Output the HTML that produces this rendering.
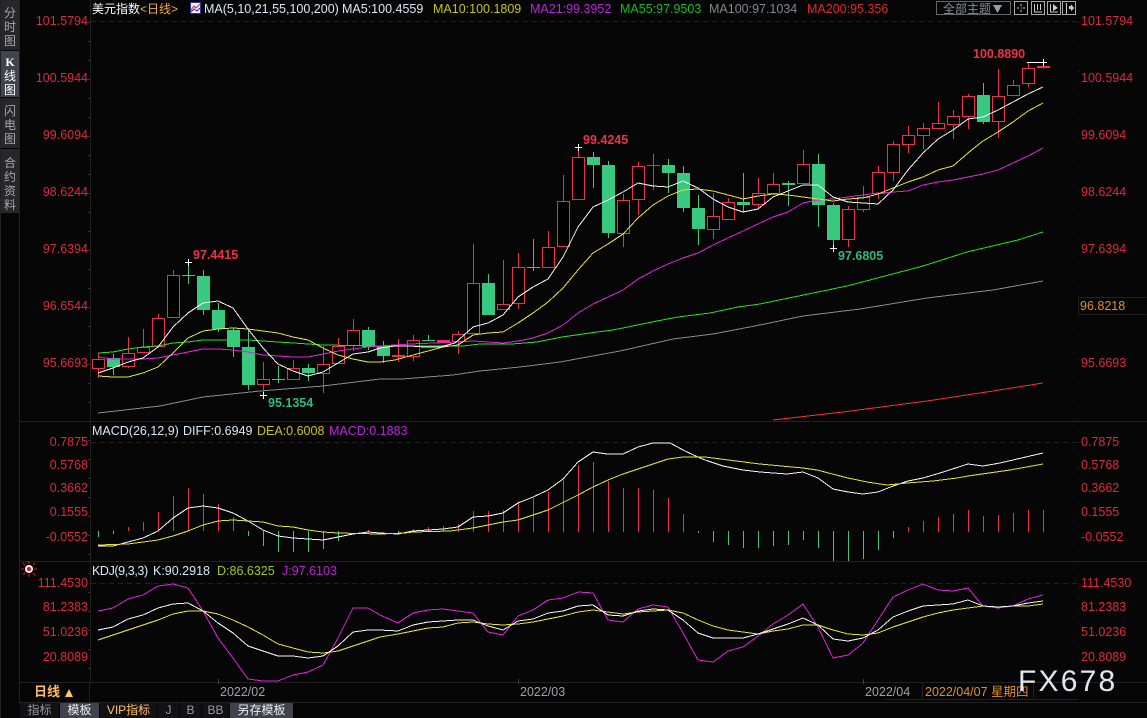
<!DOCTYPE html>
<html>
<head>
<meta charset="utf-8">
<style>
html,body{margin:0;padding:0;background:#060606;}
#r{position:relative;width:1147px;height:718px;overflow:hidden;background:#060606;font-family:"Liberation Sans","Noto Sans CJK SC",sans-serif;font-size:12.5px;line-height:14px;color:#ddd;}
#r span,#r div{position:absolute;white-space:nowrap;}
svg{position:absolute;left:0;top:0;}
.l{color:#e0283c;right:1059px;}
.a{color:#e0283c;left:1081px;}
.b{font-weight:bold;font-size:12.5px;}
.s{left:1px;width:18px;text-align:center;font-size:12px;line-height:14px;color:#a8a8a8;}
.tab{top:703px;height:15px;line-height:15px;font-size:12px;text-align:center;color:#999;background:#121214;}
.on{background:#40424e;color:#eee;}
.d{top:685px;color:#9aa4ae;font-size:12.5px;}
</style>
</head>
<body>
<div id="r">
<div style="left:1px;top:0;width:18px;height:50px;background:#26262b"></div>
<div style="left:1px;top:51px;width:18px;height:46px;background:#42434d"></div>
<div style="left:1px;top:98px;width:18px;height:50px;background:#26262b"></div>
<div style="left:1px;top:149px;width:18px;height:64px;background:#26262b"></div>

<svg width="1147" height="718" viewBox="0 0 1147 718" shape-rendering="crispEdges" fill="none">
<!-- frame -->
<path stroke="#222" d="M0.5 0V718M19.5 0V703M90.5 0V682M20 421.5H1147M20 561.5H1147M20 682.5H1147M20 702.5H1147M89.5 682V702M922.5 683V700M1033.5 683V700"/>
<path stroke="#222" stroke-dasharray="5 4" d="M91 21.5H1078M91 442.5H1078M91 583.5H1078"/>
<path stroke="#333" stroke-width="2" stroke-dasharray="1 18" d="M89 22V680"/>
<path stroke="#2c2c2c" stroke-width="1" stroke-dasharray="1 11" d="M1078.5 22V680"/>
<path stroke="#222" d="M1078 297.5H1146M1078 314.5H1146M1078.5 297V315M885 699.5H1078"/>
<path stroke="#444" d="M218.5 679V684M518.5 679V684M863.5 679V684"/>

<!-- candle wicks red -->
<path stroke="#f0304a" d="M98.5 353V378M128.5 337V368M143.5 329V352M158.5 314V346M173.5 270V317M263.5 362V395M293.5 360V379M323.5 346V393M338.5 338V363M353.5 319V351M398.5 339V362M413.5 335V361M458.5 331V354M473.5 244V333M503.5 260V310M518.5 253V309M548.5 231V267M563.5 175V246M578.5 147V199M623.5 194V247M638.5 162V215M653.5 154V190M713.5 193V239M728.5 198V220M758.5 178V208M773.5 173V194M803.5 150V183M848.5 206V247M863.5 186V212M878.5 166V199M893.5 141V181M908.5 126V153M923.5 123V149M938.5 102V128M953.5 110V139M968.5 94V129M998.5 69V138M1013.5 80V95M1028.5 62V87M1043.5 62V69M647 165.500H660"/>
<!-- candle wicks green -->
<path stroke="#38c880" d="M113.5 354V375M188.5 262V284M203.5 270V315M218.5 303V332M233.5 328V357M248.5 330V390M278.5 366V383M308.5 364V381M368.5 327V350M383.5 341V363M428.5 335V340M488.5 274V315M533.5 239V271M593.5 152V188M608.5 161V238M668.5 159V193M683.5 166V212M698.5 195V245M743.5 173V212M788.5 181V206M818.5 154V227M833.5 203V248M983.5 83V124M182 275.500H195M272 379.500H285M422 340.500H435M527 267.500H540"/>
<!-- green bodies -->
<g fill="#38c880">
<rect x="107" y="358" width="13" height="9"/><rect x="197" y="276" width="13" height="34"/><rect x="212" y="310" width="13" height="19"/><rect x="227" y="330" width="13" height="17"/><rect x="242" y="347" width="13" height="38"/><rect x="302" y="368" width="13" height="5"/><rect x="362" y="330" width="13" height="17"/><rect x="377" y="346" width="13" height="10"/><rect x="482" y="283" width="13" height="32"/><rect x="587" y="157" width="13" height="8"/><rect x="602" y="165" width="13" height="68"/><rect x="662" y="165" width="13" height="8"/><rect x="677" y="173" width="13" height="35"/><rect x="692" y="208" width="13" height="21"/><rect x="737" y="202" width="13" height="3"/><rect x="782" y="183" width="13" height="2"/><rect x="812" y="164" width="13" height="41"/><rect x="827" y="205" width="13" height="35"/><rect x="977" y="95" width="13" height="27"/>
</g>
<!-- red bodies -->
<g fill="#000" stroke="#f0304a">
<rect x="92.5" y="359.5" width="12" height="9"/><rect x="122.5" y="353.5" width="12" height="13"/><rect x="137.5" y="347.5" width="12" height="5"/><rect x="152.5" y="318.5" width="12" height="28"/><rect x="167.5" y="275.5" width="12" height="42"/><rect x="257.5" y="379.5" width="12" height="5"/><rect x="287.5" y="368.5" width="12" height="11"/><rect x="317.5" y="364.5" width="12" height="9"/><rect x="332.5" y="346.5" width="12" height="17"/><rect x="347.5" y="330.5" width="12" height="15"/><rect x="407.5" y="340.5" width="12" height="16"/><rect x="452.5" y="334.5" width="12" height="7"/><rect x="467.5" y="283.5" width="12" height="50"/><rect x="497.5" y="304.5" width="12" height="5"/><rect x="512.5" y="267.5" width="12" height="36"/><rect x="542.5" y="247.5" width="12" height="20"/><rect x="557.5" y="201.5" width="12" height="45"/><rect x="572.5" y="157.5" width="12" height="42"/><rect x="617.5" y="200.5" width="12" height="33"/><rect x="632.5" y="166.5" width="12" height="33"/><rect x="707.5" y="216.5" width="12" height="13"/><rect x="722.5" y="202.5" width="12" height="17"/><rect x="752.5" y="193.5" width="12" height="11"/><rect x="767.5" y="184.5" width="12" height="9"/><rect x="797.5" y="164.5" width="12" height="19"/><rect x="842.5" y="209.5" width="12" height="30"/><rect x="857.5" y="197.5" width="12" height="12"/><rect x="872.5" y="172.5" width="12" height="21"/><rect x="887.5" y="144.5" width="12" height="28"/><rect x="902.5" y="135.5" width="12" height="9"/><rect x="917.5" y="128.5" width="12" height="7"/><rect x="932.5" y="123.5" width="12" height="5"/><rect x="947.5" y="116.5" width="12" height="8"/><rect x="962.5" y="96.5" width="12" height="20"/><rect x="992.5" y="96.5" width="12" height="25"/><rect x="1007.5" y="85.5" width="12" height="10"/><rect x="1022.5" y="68.5" width="12" height="15"/>
</g>
<g fill="#f0304a"><rect x="392" y="355" width="13" height="2"/><rect x="437" y="340" width="13" height="3"/><rect x="1037" y="66" width="13" height="2"/></g>
<!-- crosses -->
<path stroke="#fff" d="M185 262.500H192M188.500 259V266M260 395.500H267M263.500 392V399M575 147.500H582M578.500 144V151M830 248.500H837M833.500 245V252M1027 62.500H1047M1043.500 59V66"/>

<!-- MA lines -->
<polyline stroke="#8a8a8a" points="98,413 160,406 203,397 260,391 323,386 380,379 402,379 453,375 480,371 520,367 560,362 620,351 673,339 713,334 760,325 803,316 860,309 927,298 993,290 1043,281"/>
<polyline stroke="#ff2a2a" points="773,420 843,412 927,401 993,391 1043,383"/>
<polyline stroke="#20e020" points="98,353 113,352 128,349 143,347 158,346 173,343 188,342 203,340 248,340 263,341 293,343 323,345 380,346 463,346 480,344 512,344 537,342 562,337 597,332 613,330 657,321 678,317 710,313 738,307 760,304 847,286 923,266 967,252 1018,240 1043,232"/>
<polyline stroke="#e020e0" points="98,357 113,359 143,359 158,358 173,355 188,352 203,349 218,349 233,350 248,352 263,355 293,357 308,357 323,354 338,351 353,349 368,347 380,346 410,344 458,342 473,341 488,342 503,343 518,341 533,338 548,333 563,325 578,313 593,304 608,297 623,290 638,279 653,271 668,264 683,258 698,253 713,245 728,238 743,231 760,223 773,217 788,212 803,203 818,200 833,199 848,197 863,195 878,193 893,192 908,191 923,185 938,182 953,180 968,177 983,174 998,170 1013,163 1028,156 1043,148"/>
<polyline stroke="#e6e61e" points="98,376 113,377 128,377 143,373 158,367 173,353 188,338 203,331 218,329 233,328 248,329 263,331 278,333 293,337 308,340 323,348 338,355 353,359 368,362 380,362 395,360 413,355 443,347 458,345 473,335 488,333 503,332 518,323 533,313 548,302 563,288 578,270 593,253 608,244 623,234 638,218 653,205 668,196 683,190 698,189 713,191 728,195 743,199 758,196 773,194 788,195 803,197 818,199 833,201 848,199 863,198 878,194 893,188 908,182 923,177 938,170 953,166 968,153 983,141 998,132 1013,122 1028,111 1043,103"/>
<polyline stroke="#f4f4f4" points="98,373 113,368 128,362 143,358 158,347 173,327 188,313 203,303 218,301 233,308 248,329 263,348 278,364 293,371 308,376 323,372 338,363 353,354 368,352 380,348 395,346 410,346 425,347 440,347 455,343 473,327 488,323 503,315 518,297 533,287 548,279 563,257 578,227 593,207 608,200 623,192 638,183 653,186 668,187 683,181 698,188 713,199 728,207 743,212 758,209 773,197 788,191 803,185 818,185 833,197 848,202 863,203 878,204 893,190 908,170 923,153 938,139 953,130 968,119 983,117 998,110 1013,102 1028,94 1043,87"/>

<!-- MACD bars -->
<path stroke="#f0304a" d="M128.5 527V531M143.5 522V531M158.5 512V531M173.5 496V531M188.5 488V531M203.5 494V531M218.5 504V531M233.5 517V531M368.5 530V532M413.5 529V532M428.5 527V532M443.5 526V532M458.5 524V532M473.5 511V532M488.5 511V532M503.5 510V532M518.5 501V532M533.5 498V532M548.5 492V532M563.5 480V532M578.5 465V532M593.5 462V532M608.5 481V532M623.5 488V532M638.5 488V532M653.5 490V532M668.5 498V532M683.5 514V532M908.5 527V532M923.5 521V532M938.5 517V532M953.5 514V532M968.5 510V532M983.5 516V532M998.5 515V532M1013.5 513V532M1028.5 510V532M1043.5 510V532"/>
<path stroke="#38c880" d="M98.5 531V537M113.5 531V534M248.5 531V536M263.5 531V546M278.5 531V552M293.5 531V552M308.5 531V552M323.5 531V549M338.5 531V541M398.5 531V533M698.5 531V533M713.5 531V542M728.5 531V545M743.5 531V548M758.5 531V548M773.5 531V546M788.5 531V545M803.5 531V540M818.5 531V548M833.5 531V561M848.5 531V561M863.5 531V559M878.5 531V550M893.5 531V538"/>
<polyline stroke="#f4f4f4" points="98,546 113,546 128,542 143,538 158,531 173,518 188,508 203,506 218,508 233,513 248,521 263,530 278,536 293,538 308,539 323,540 338,537 353,534 368,532 380,533 398,534 413,531 443,529 458,527 473,517 488,516 503,513 518,503 533,497 548,490 563,479 578,462 593,452 607,454 623,454 638,447 653,443 670,443 685,451 700,458 708,461 723,466 743,470 760,472 787,474 803,472 818,478 833,489 848,492 863,494 878,492 893,486 908,481 923,478 940,473 968,464 983,466 1000,463 1043,453"/>
<polyline stroke="#e6e61e" points="98,545 128,544 143,542 158,540 173,536 188,531 203,525 218,521 233,520 248,521 263,522 278,526 293,527 308,530 323,532 338,533 380,534 405,533 413,532 450,531 473,528 503,522 518,520 533,515 548,510 560,504 578,495 593,487 608,480 623,474 638,469 653,464 668,459 683,457 705,457 760,464 803,468 817,470 848,478 867,482 887,485 907,483 933,481 957,478 968,476 1010,470 1043,464"/>

<!-- KDJ -->
<polyline stroke="#e020e0" points="98,611 113,608 128,599 143,595 158,586 173,584 188,588 203,611 218,638 233,658 248,679 263,681 278,681 293,675 308,672 323,665 338,638 353,608 368,608 380,615 398,623 413,613 428,610 443,609 458,611 473,613 488,632 503,635 518,616 533,610 548,600 563,598 578,592 593,593 608,620 623,622 638,609 653,605 668,607 683,633 698,660 713,662 728,651 743,647 758,636 773,624 788,615 803,604 818,627 833,658 848,655 863,643 878,620 893,597 908,590 923,584 938,590 953,591 968,588 983,606 998,608 1013,606 1028,599 1043,595"/>
<polyline stroke="#e6e61e" points="98,640 113,635 128,630 143,625 158,620 173,614 188,611 203,611 218,614 233,620 248,627 263,635 278,644 293,648 308,652 323,653 338,651 353,646 368,641 380,637 398,634 413,631 428,628 443,627 458,623 473,622 488,624 503,625 518,624 533,622 548,619 563,616 578,612 593,610 608,612 623,614 638,612 653,611 668,610 683,613 698,620 713,626 728,630 743,632 758,634 773,631 788,629 803,625 818,625 833,630 848,634 863,635 878,633 893,627 908,622 923,617 938,613 953,610 968,608 983,606 998,607 1013,606 1028,606 1043,604"/>
<polyline stroke="#f4f4f4" points="98,630 113,627 128,619 143,615 158,608 173,604 188,603 203,611 218,623 233,633 248,646 263,651 278,656 293,656 308,658 323,656 338,646 353,632 368,630 380,630 398,631 413,625 428,622 443,621 458,620 473,620 488,626 503,630 518,621 533,619 548,613 563,611 578,606 593,605 608,615 623,616 638,611 653,609 668,610 683,620 698,633 713,638 728,638 743,638 758,634 773,629 788,624 803,618 818,625 833,639 848,641 863,638 878,630 893,617 908,611 923,606 938,605 953,604 968,600 983,606 998,607 1013,606 1028,603 1043,601"/>

<!-- KDJ indicator -->
<g>
<path stroke="#f01020" d="M29 561V564M29 574V577M21 569H24M34 569H37M23 563L25 565M33 573L35 575M35 563L33 565M25 573L23 575"/>
<circle cx="29" cy="569" r="4" fill="#fff" shape-rendering="auto"/>
<circle cx="29" cy="569" r="2.2" fill="#f01020" shape-rendering="auto"/>
</g>

<!-- header icon -->
<rect x="190.5" y="2.5" width="10" height="11" fill="#f4f4ff" stroke="#3030a0"/>
<path stroke="#e02020" shape-rendering="auto" d="M191 10L194 6L196 8L200 4"/>
<path stroke="#2020c0" shape-rendering="auto" d="M191 12L194 9L197 11L200 8"/>

<!-- toolbar -->
<rect x="936.5" y="1.5" width="74" height="13" stroke="#666"/>
<g stroke="#aaa"><rect x="1014.5" y="1.5" width="13" height="13"/><rect x="1031.5" y="1.5" width="13" height="13"/><rect x="1047.5" y="1.5" width="13" height="13"/><rect x="1062.5" y="1.5" width="13" height="13"/></g>
<path stroke="#ccc" d="M1021 4V6M1021 10V12M1017 8H1019M1023 8H1025M1021 8H1022M1034.5 4V12M1034 12H1042M1037.5 4V10M1040.5 4V10M1050.5 4V12H1058M1066.5 3V14"/>
<path fill="#ccc" d="M1053 4L1058 8L1053 11ZM1069 6H1071V4L1074 8L1071 11V9H1069Z"/>
<path fill="#8aa0b0" d="M993 5H1002L997.500 13Z"/>
<path fill="#ffc860" d="M65 697H73L69 689Z" shape-rendering="auto"/>
</svg>

<!-- sidebar -->
<span class="s" style="top:6px">分</span><span class="s" style="top:20px">时</span><span class="s" style="top:34px">图</span>
<span class="s" style="top:55px;color:#fff;font-family:'Liberation Serif',serif;font-weight:bold">K</span><span class="s" style="top:69px;color:#fff">线</span><span class="s" style="top:83px;color:#fff">图</span>
<span class="s" style="top:104px">闪</span><span class="s" style="top:118px">电</span><span class="s" style="top:132px">图</span>
<span class="s" style="top:156px">合</span><span class="s" style="top:170px">约</span><span class="s" style="top:184px">资</span><span class="s" style="top:198px">料</span>

<!-- header -->
<span style="left:92px;top:2px;font-size:12px;color:#fff">美元指数</span>
<span style="left:140px;top:2px;font-size:12px;color:#f0b040">&lt;日线&gt;</span>
<span style="left:204px;top:2px;color:#d8e8f8">MA(5,10,21,55,100,200)</span>
<span style="left:342px;top:2px;color:#d8e8f8">MA5:100.4559</span>
<span style="left:433px;top:2px;color:#c8c800">MA10:100.1809</span>
<span style="left:530px;top:2px;color:#c020e0">MA21:99.3952</span>
<span style="left:620px;top:2px;color:#10c020">MA55:97.9503</span>
<span style="left:709px;top:2px;color:#808890">MA100:97.1034</span>
<span style="left:807px;top:2px;color:#e02828">MA200:95.356</span>
<span style="left:943px;top:2px;font-size:12px;color:#8090a0">全部主题</span>

<!-- left axis -->
<span class="l" style="top:14px">101.5794</span>
<span class="l" style="top:71px">100.5944</span>
<span class="l" style="top:128px">99.6094</span>
<span class="l" style="top:185px">98.6244</span>
<span class="l" style="top:242px">97.6394</span>
<span class="l" style="top:299px">96.6544</span>
<span class="l" style="top:356px">95.6693</span>
<span class="l" style="top:435px">0.7875</span>
<span class="l" style="top:458px">0.5768</span>
<span class="l" style="top:481px">0.3662</span>
<span class="l" style="top:505px">0.1555</span>
<span class="l" style="top:530px">-0.0552</span>
<span class="l" style="top:576px">111.4530</span>
<span class="l" style="top:600px">81.2383</span>
<span class="l" style="top:625px">51.0236</span>
<span class="l" style="top:650px">20.8089</span>

<!-- right axis -->
<span class="a" style="top:14px">101.5794</span>
<span class="a" style="top:71px">100.5944</span>
<span class="a" style="top:128px">99.6094</span>
<span class="a" style="top:185px">98.6244</span>
<span class="a" style="top:242px">97.6394</span>
<span class="a" style="left:1080px;top:299px;color:#e09020">96.8218</span>
<span class="a" style="top:356px">95.6693</span>
<span class="a" style="top:435px">0.7875</span>
<span class="a" style="top:458px">0.5768</span>
<span class="a" style="top:481px">0.3662</span>
<span class="a" style="top:505px">0.1555</span>
<span class="a" style="top:530px">-0.0552</span>
<span class="a" style="top:576px">111.4530</span>
<span class="a" style="top:600px">81.2383</span>
<span class="a" style="top:625px">51.0236</span>
<span class="a" style="top:650px">20.8089</span>

<!-- price labels -->
<span class="b" style="left:193px;top:248px;color:#f0304a">97.4415</span>
<span class="b" style="left:583px;top:133px;color:#f0304a">99.4245</span>
<span class="b" style="left:973px;top:47px;color:#f0304a">100.8890</span>
<span class="b" style="left:838px;top:249px;color:#2fb880">97.6805</span>
<span class="b" style="left:268px;top:396px;color:#2fb880">95.1354</span>

<!-- MACD header -->
<span style="left:92px;top:424px;color:#d8e8f8">MACD(26,12,9)</span>
<span style="left:183px;top:424px;color:#d8e8f8">DIFF:0.6949</span>
<span style="left:257px;top:424px;color:#c8c800">DEA:0.6008</span>
<span style="left:329px;top:424px;color:#c020e0">MACD:0.1883</span>

<!-- KDJ header -->
<span style="left:92px;top:564px;color:#d8e8f8;letter-spacing:-0.4px">KDJ(9,3,3)</span>
<span style="left:153px;top:564px;color:#d8e8f8">K:90.2918</span>
<span style="left:217px;top:564px;color:#a8c800">D:86.6325</span>
<span style="left:282px;top:564px;color:#c020e0">J:97.6103</span>

<!-- bottom -->
<span style="left:34px;top:685px;font-size:13px;font-weight:bold;color:#ffc060">日线</span>
<span class="d" style="left:220px">2022/02</span>
<span class="d" style="left:520px">2022/03</span>
<span class="d" style="left:865px">2022/04</span>
<span class="d" style="left:925px;color:#e09020">2022/04/07 星期四</span>

<div class="tab" style="left:20px;width:39px">指标</div>
<div class="tab on" style="left:60px;width:39px">模板</div>
<div class="tab" style="left:100px;width:57px;color:#ffc060">VIP指标</div>
<div class="tab" style="left:158px;width:21px">J</div>
<div class="tab" style="left:180px;width:21px">B</div>
<div class="tab" style="left:202px;width:27px">BB</div>
<div class="tab on" style="left:230px;width:63px">另存模板</div>

<!-- watermark -->
<span style="left:1018px;top:665px;font-size:30px;line-height:34px;letter-spacing:2.2px;color:#dfe8f2">FX678</span>
</div>
</body>
</html>
